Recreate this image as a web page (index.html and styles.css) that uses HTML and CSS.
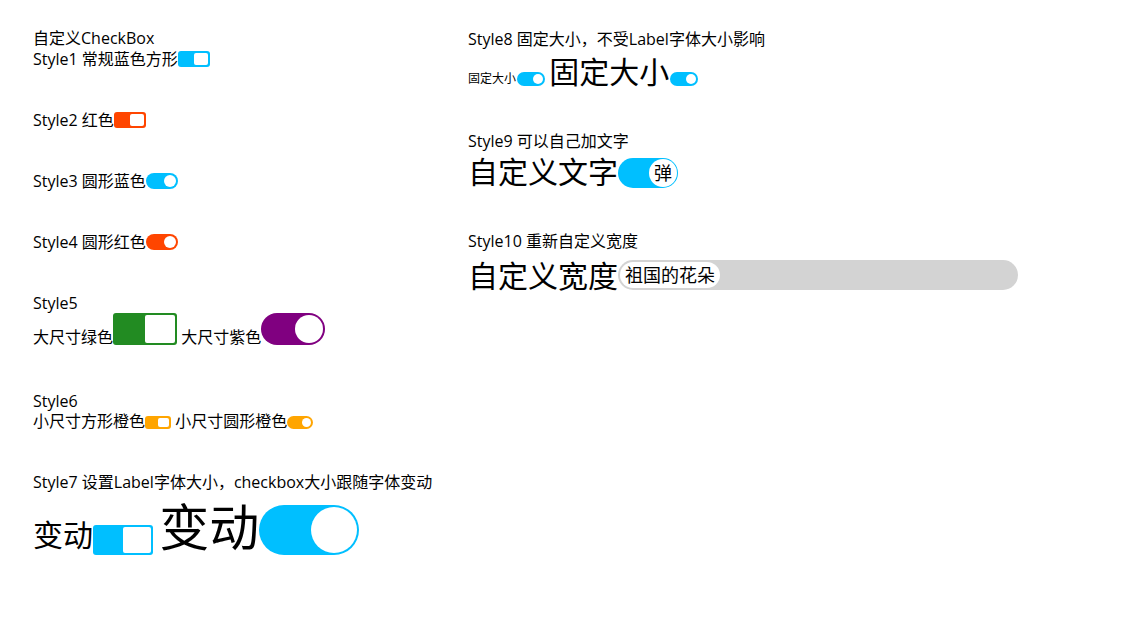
FILE: index.html
```html
<!DOCTYPE html>
<html lang="zh-CN">
<head>
    <meta charset="UTF-8">
    <meta name="viewport" content="width=device-width, initial-scale=1.0">
    <title>自定义CheckBox</title>
    <link rel="stylesheet" href="styles.css">
</head>
<body>
    <div id="page">
        <div class="col">
            <div class="heading">自定义CheckBox</div>
            <div class="item">Style1 常规蓝色方形<span class="switch square blue"><i class="knob"></i></span></div>
            <div class="item">Style2 红色<span class="switch square red"><i class="knob"></i></span></div>
            <div class="item">Style3 圆形蓝色<span class="switch round blue"><i class="knob"></i></span></div>
            <div class="item">Style4 圆形红色<span class="switch round red"><i class="knob"></i></span></div>
            <div class="item style5">
                <div class="title">Style5</div>
                <div>大尺寸绿色<span class="switch square green big"><i class="knob"></i></span> 大尺寸紫色<span class="switch round purple big"><i class="knob"></i></span></div>
            </div>
            <div class="item">
                <div class="title tall">Style6</div>
                <div>小尺寸方形橙色<span class="switch square orange small"><i class="knob"></i></span> 小尺寸圆形橙色<span class="switch round orange small"><i class="knob"></i></span></div>
            </div>
            <div class="item">
                <div class="title">Style7 设置Label字体大小，checkbox大小跟随字体变动</div>
                <div class="row7"><span class="t30">变动<span class="switch square blue"><i class="knob"></i></span></span> <span class="t50">变动<span class="switch round blue"><i class="knob"></i></span></span></div>
            </div>
        </div>
        <div class="col right">
            <div class="item">
                <div class="title">Style8 固定大小，不受Label字体大小影响</div>
                <div class="row8"><span class="t12">固定大小</span><span class="switch round blue fixed"><i class="knob"></i></span> <span class="t30">固定大小</span><span class="switch round blue fixed"><i class="knob"></i></span></div>
            </div>
            <div class="item">
                <div class="title">Style9 可以自己加文字</div>
                <div class="row9"><span class="t30">自定义文字<span class="switch round blue"><i class="knob text">弹</i></span></span></div>
            </div>
            <div class="item">
                <div class="title">Style10 重新自定义宽度</div>
                <div class="row10"><span class="t30">自定义宽度<span class="switch round gray wide"><i class="knob pill">祖国的花朵</i></span></span></div>
            </div>
        </div>
    </div>
</body>
</html>
```

FILE: styles.css
```css
* {
    margin: 0;
    padding: 0;
}

body {
    font-family: "Open Sans", "Noto Sans CJK SC", sans-serif;
    font-size: 16px;
    line-height: 19px;
    color: #000000;
    background: #ffffff;
}

#page {
    display: flex;
    padding: 30px 0 0 33px;
}

.col:first-child {
    width: 435px;
}

.heading {
    line-height: 19px;
    margin-top: -1px;
    margin-bottom: 2px;
}

.item {
    margin-bottom: 42px;
}

.item.style5 {
    margin-bottom: 44px;
}

.title.tall {
    line-height: 21px;
}

.right .item {
    margin-bottom: 44px;
}

.t12 {
    font-size: 12px;
}

.t30 {
    font-size: 30px;
    line-height: 30px;
}

.t50 {
    font-size: 50px;
    line-height: 50px;
    margin-left: 2px;
}

.row7 {
    margin-top: 10px;
}

.row8 {
    margin-top: 8px;
}

.row9 {
    margin-top: 6px;
}

.row10 {
    margin-top: 9px;
}

/* 开关本体 */
.switch {
    display: inline-block;
    position: relative;
    box-sizing: border-box;
    width: 2em;
    height: 1em;
    vertical-align: -2px;
}

.row7 .switch {
    vertical-align: -9px;
}

.row8 .switch,
.row10 .switch {
    vertical-align: -3px;
}

.row9 .switch {
    vertical-align: -5px;
}

.switch .knob {
    position: absolute;
    top: 2px;
    right: 2px;
    bottom: 2px;
    background: #ffffff;
    font-style: normal;
}

.square {
    border-radius: 3px;
}

.square .knob {
    width: calc(1em - 2px);
    border-radius: 2px;
}

.round {
    border-radius: 0.5em;
}

.round .knob {
    width: calc(1em - 4px);
    border-radius: 50%;
}

.big {
    font-size: 32px;
}

.small {
    font-size: 13px;
}

.fixed {
    font-size: 14px;
    margin-left: 1px;
}

.blue { background: #00bfff; }
.red { background: #ff4500; }
.green { background: #228b22; }
.purple { background: #800080; }
.orange { background: #ffa500; }
.gray { background: #d3d3d3; }

.round .knob.text {
    top: 1px;
    right: 1px;
    bottom: 1px;
    width: 28px;
    font-size: 18px;
    line-height: 28px;
    text-align: center;
    color: #000000;
}

.wide {
    width: 400px;
    height: 30px;
    border-radius: 15px;
}

.round .knob.pill {
    right: auto;
    left: 2px;
    width: auto;
    padding: 0 5px;
    border-radius: 13px;
    font-size: 18px;
    line-height: 26px;
    color: #000000;
    white-space: nowrap;
}
```
